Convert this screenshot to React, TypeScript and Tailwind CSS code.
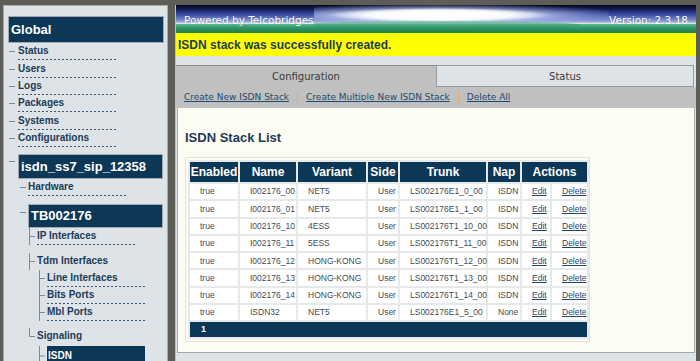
import React from "react";

type Conn = "tick" | "tee" | "ell";

function Connector({ kind, h = 17 }: { kind: Conn; h?: number }) {
  const mid = h / 2;
  return (
    <svg width="7" height={h} className="shrink-0" viewBox={`0 0 7 ${h}`}>
      {kind !== "tick" && (
        <line x1="0.5" y1="0" x2="0.5" y2={kind === "ell" ? mid : h} stroke="#7f8b94" strokeWidth="1" />
      )}
      <line x1={kind === "tick" ? 0 : 0.5} y1={mid} x2="6" y2={mid} stroke="#7f8b94" strokeWidth="1" />
    </svg>
  );
}

function Dash() {
  return (
    <div className="h-px w-[100px] bg-[repeating-linear-gradient(to_right,#3a5671_0px,#3a5671_2px,transparent_2px,transparent_4px)]" />
  );
}

function MenuText({ children }: { children: React.ReactNode }) {
  return <span className="text-[10px] font-bold leading-[16px] text-[#1c3b58] whitespace-nowrap">{children}</span>;
}

function LeftPanel() {
  const top = ["Status", "Users", "Logs", "Packages", "Systems", "Configurations"];
  return (
    <div className="w-[165px] h-[370px] shrink-0 bg-[#dde3e7] border border-[#a7acab] flex flex-col">
      <div className="mt-[10px] ml-[4px] w-[156px] h-[27px] bg-[#0c3756] border border-[#a2aaaf] flex items-center pl-[2px]">
        <span className="text-white font-bold text-[13px] leading-none">Global</span>
      </div>
      {top.map((t) => (
        <div key={t} className="flex items-center h-[17.4px] ml-[5px]">
          <Connector kind="tick" />
          <div className="ml-[2px] flex flex-col">
            <MenuText>{t}</MenuText>
            <Dash />
          </div>
        </div>
      ))}
      <div className="flex items-start ml-[5px] mt-[6.6px]">
        <div className="mt-[-1px]">
          <Connector kind="tick" />
        </div>
        <div className="ml-[2px] w-[145px] h-[25px] bg-[#0c3756] border border-[#a2aaaf] flex items-center pl-[2px]">
          <span className="text-white font-bold text-[13px] leading-none">isdn_ss7_sip_12358</span>
        </div>
      </div>
      <div className="flex items-center h-[17.4px] ml-[16px]">
        <Connector kind="tick" />
        <div className="ml-[1px] flex flex-col">
          <MenuText>Hardware</MenuText>
          <Dash />
        </div>
      </div>
      <div className="flex items-start ml-[16px] mt-[7.6px]">
        <Connector kind="tick" />
        <div className="ml-[1px] w-[135px] h-[24px] bg-[#0c3756] border border-[#a2aaaf] flex items-center pl-[2px]">
          <span className="text-white font-bold text-[13px] leading-none">TB002176</span>
        </div>
      </div>
      <div className="flex items-center h-[17.4px] ml-[25px]">
        <Connector kind="tee" />
        <div className="ml-[1px] flex flex-col">
          <MenuText>IP Interfaces</MenuText>
          <Dash />
        </div>
      </div>
      <div className="flex items-center h-[17.4px] ml-[25px] mt-[7.6px]">
        <Connector kind="tee" />
        <div className="ml-[1px] flex flex-col h-[17px]">
          <MenuText>Tdm Interfaces</MenuText>
        </div>
      </div>
      {["Line Interfaces", "Bits Ports", "Mbl Ports"].map((t) => (
        <div key={t} className="flex items-center h-[17px] ml-[35px]">
          <Connector kind="tee" />
          <div className="ml-[1px] flex flex-col">
            <MenuText>{t}</MenuText>
            <Dash />
          </div>
        </div>
      ))}
      <div className="flex items-center h-[17.4px] ml-[25px] mt-[7px]">
        <Connector kind="ell" />
        <div className="ml-[1px] flex flex-col h-[17px]">
          <MenuText>Signaling</MenuText>
        </div>
      </div>
      <div className="flex items-start ml-[35px]">
        <Connector kind="tee" h={20} />
        <div className="ml-[1px] w-[98px] h-[20px] bg-[#0c3756] flex items-center pl-[1px]">
          <span className="text-white font-bold text-[10px] leading-none">ISDN</span>
        </div>
      </div>
    </div>
  );
}

const rows: string[][] = [
  ["true", "I002176_00", "NET5", "User", "LS002176E1_0_00", "ISDN"],
  ["true", "I002176_01", "NET5", "User", "LS002176E1_1_00", "ISDN"],
  ["true", "I002176_10", "4ESS", "User", "LS002176T1_10_00", "ISDN"],
  ["true", "I002176_11", "5ESS", "User", "LS002176T1_11_00", "ISDN"],
  ["true", "I002176_12", "HONG-KONG", "User", "LS002176T1_12_00", "ISDN"],
  ["true", "I002176_13", "HONG-KONG", "User", "LS002176T1_13_00", "ISDN"],
  ["true", "I002176_14", "HONG-KONG", "User", "LS002176T1_14_00", "ISDN"],
  ["true", "ISDN32", "NET5", "User", "LS002176E1_5_00", "None"],
];

function StackTable() {
  const th = "bg-[#0c3756] text-white font-bold text-[12px] leading-none text-center p-0 h-[20px]";
  const td = "bg-white text-[#3d4c5a] text-[8.5px] leading-none text-left pl-[10px] pr-0 h-[15.3px] whitespace-nowrap";
  const link = "text-[#22476a] underline";
  return (
    <div className="ml-[7px] mt-[11px] w-[405px] border border-[#e4e3d9] p-[2px]">
      <table className="table-fixed border-separate border-spacing-[2px] bg-[#e6e9ea] w-[401px]">
        <colgroup>
          <col className="w-[48px]" />
          <col className="w-[56px]" />
          <col className="w-[68px]" />
          <col className="w-[30px]" />
          <col className="w-[86px]" />
          <col className="w-[32px]" />
          <col className="w-[28px]" />
          <col className="w-[35px]" />
        </colgroup>
        <thead>
          <tr>
            <th className={th}>Enabled</th>
            <th className={th}>Name</th>
            <th className={th}>Variant</th>
            <th className={th}>Side</th>
            <th className={th}>Trunk</th>
            <th className={th}>Nap</th>
            <th className={th} colSpan={2}>
              Actions
            </th>
          </tr>
        </thead>
        <tbody>
          {rows.map((r) => (
            <tr key={r[1]}>
              {r.map((c, i) => (
                <td key={i} className={td}>
                  {c}
                </td>
              ))}
              <td className={td}>
                <span className={link}>Edit</span>
              </td>
              <td className={td}>
                <span className={link}>Delete</span>
              </td>
            </tr>
          ))}
          <tr>
            <td colSpan={8} className="bg-[#0c3756] text-white font-bold text-[9px] leading-none pl-[11px] h-[15px]">
              1
            </td>
          </tr>
        </tbody>
      </table>
    </div>
  );
}

function Glow() {
  return (
    <svg className="flex-1 h-[28px]" viewBox="0 0 292 28" preserveAspectRatio="none">
      <defs>
        <radialGradient id="glowOuter" cx="0.5" cy="0.5" r="0.5">
          <stop offset="0" stopColor="#ffffff" stopOpacity="0.95" />
          <stop offset="0.5" stopColor="#dfe6ff" stopOpacity="0.7" />
          <stop offset="1" stopColor="#9aa8ee" stopOpacity="0" />
        </radialGradient>
        <radialGradient id="glowCore" cx="0.5" cy="0.5" r="0.5">
          <stop offset="0" stopColor="#ffffff" stopOpacity="1" />
          <stop offset="0.65" stopColor="#ffffff" stopOpacity="0.92" />
          <stop offset="1" stopColor="#ffffff" stopOpacity="0" />
        </radialGradient>
        <linearGradient id="greenBand" x1="0" y1="0" x2="0" y2="1">
          <stop offset="0" stopColor="#8fd6b4" stopOpacity="0.9" />
          <stop offset="0.3" stopColor="#3fa476" stopOpacity="0.6" />
          <stop offset="1" stopColor="#2a8a5a" stopOpacity="0" />
        </linearGradient>
      </defs>
      <ellipse cx="122" cy="10" rx="190" ry="11.5" fill="url(#glowOuter)" />
      <ellipse cx="124" cy="10" rx="110" ry="7" fill="url(#glowCore)" />
      <ellipse cx="124" cy="20" rx="140" ry="4" fill="url(#greenBand)" />
    </svg>
  );
}

function RightFrame() {
  return (
    <div className="ml-[7px] w-[521px] h-[356px] shrink-0 flex flex-col bg-[#dde3e7] border-l border-[#b9bec0]">
      <div className="h-[28px] flex items-stretch overflow-hidden font-['DejaVu_Sans',sans-serif] text-[10.5px] leading-[13px] text-white bg-[linear-gradient(to_bottom,#05071a_0%,#141e58_16%,#3a4ca6_34%,#6e7fc0_50%,#98a6d6_60%,#d8e8e4_66%,#52b08a_70%,#2e9262_84%,#207c4c_100%)]">
        <span className="pt-[9px] pl-[8px] shrink-0 [text-shadow:0_0_1px_rgba(0,0,0,0.3)]">Powered by Telcobridges</span>
        <Glow />
        <span className="pt-[9px] pr-[8px] shrink-0 [text-shadow:0_0_1px_rgba(0,0,0,0.3)]">Version: 2.3.18</span>
      </div>
      <div className="h-[23px] bg-[#ffff00] flex items-center pl-[2px]">
        <span className="text-[12px] font-bold text-[#1c3b58] leading-none">ISDN stack was successfully created.</span>
      </div>
      <div className="h-[9px]" />
      <div className="h-[22px] flex font-['DejaVu_Sans',sans-serif] text-[10px] text-[#3a3a3a]">
        <div className="w-[260px] bg-[#c0c0c0] border-t border-[#8e8e8e] flex items-center justify-center">
          Configuration
        </div>
        <div className="w-[258px] bg-[#dde3e7] border border-[#9a9a9a] flex items-center justify-center">
          Status
        </div>
      </div>
      <div className="h-[21px] bg-[#c0c0c0] flex items-center pl-[8px] font-['DejaVu_Sans',sans-serif] text-[9px] text-[#1f4a6c]">
        <span className="underline">Create New ISDN Stack</span>
        <span className="mx-[8px] w-px h-[11px] bg-[#e8a86a]" />
        <span className="underline">Create Multiple New ISDN Stack</span>
        <span className="mx-[8px] w-px h-[11px] bg-[#e8a86a]" />
        <span className="underline">Delete All</span>
      </div>
      <div className="h-[245px] mx-[1px] bg-[#fefdf3] border border-t-0 border-[#a8a8a6] flex flex-col">
        <div className="mt-[22px] ml-[7px] text-[13px] font-bold text-[#1b3a57] leading-[16px]">ISDN Stack List</div>
        <StackTable />
      </div>
      <div className="flex-1" />
    </div>
  );
}

export default function App() {
  return (
    <div className="w-[700px] h-[361px] overflow-hidden bg-[#5c5d57] flex items-start pt-[5px] pl-[3px] font-['Liberation_Sans',Arial,sans-serif]">
      <LeftPanel />
      <RightFrame />
    </div>
  );
}
